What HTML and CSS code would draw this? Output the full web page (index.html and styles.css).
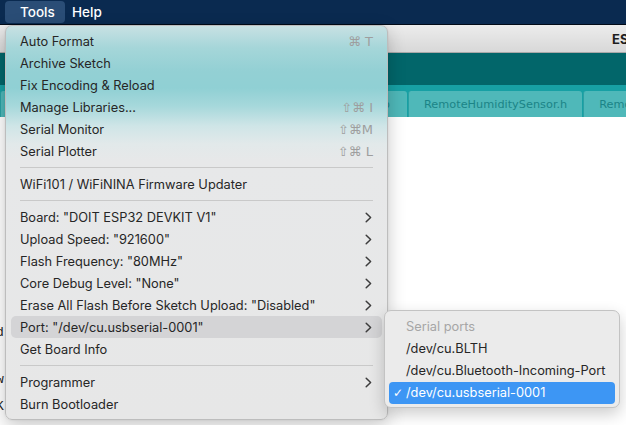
FILE: index.html
```html
<!DOCTYPE html>
<html>
<head>
<meta charset="utf-8">
<link rel="stylesheet" href="styles.css">
</head>
<body>
<div class="menubar">
  <div class="mb-item active">Tools</div>
  <div class="mb-item">Help</div>
</div>
<div class="window">
  <div class="titlebar"><span class="title">ESP32_RemoteHumiditySensor</span></div>
  <div class="toolbar"></div>
  <div class="tabbar">
    <div class="tab first"><span class="tab-text">RemoteHumiditySensor.ino.cpp</span></div>
    <div class="tab"><span class="tab-text">RemoteHumiditySensor.h</span></div>
    <div class="tab"><span class="tab-text">RemoteHumiditySensor.cpp</span></div>
  </div>
  <div class="editor">
    <div class="code-line l1">d</div>
    <div class="code-line l2">w</div>
    <div class="code-line l3">K</div>
  </div>
</div>

<div class="menu">
  <div class="item"><span class="label">Auto Format</span><span class="shortcut">⌘ T</span></div>
  <div class="item"><span class="label">Archive Sketch</span></div>
  <div class="item"><span class="label">Fix Encoding &amp; Reload</span></div>
  <div class="item"><span class="label">Manage Libraries...</span><span class="shortcut">⇧⌘ I</span></div>
  <div class="item"><span class="label">Serial Monitor</span><span class="shortcut">⇧⌘M</span></div>
  <div class="item"><span class="label">Serial Plotter</span><span class="shortcut">⇧⌘ L</span></div>
  <div class="sep"></div>
  <div class="item"><span class="label">WiFi101 / WiFiNINA Firmware Updater</span></div>
  <div class="sep"></div>
  <div class="item"><span class="label">Board: "DOIT ESP32 DEVKIT V1"</span><svg class="chev" width="7" height="11" viewBox="0 0 7 11"><path d="M1.2 1.2 L5.6 5.5 L1.2 9.8" fill="none" stroke="#3c3c3c" stroke-width="1.5" stroke-linecap="round" stroke-linejoin="round"/></svg></div>
  <div class="item"><span class="label">Upload Speed: "921600"</span><svg class="chev" width="7" height="11" viewBox="0 0 7 11"><path d="M1.2 1.2 L5.6 5.5 L1.2 9.8" fill="none" stroke="#3c3c3c" stroke-width="1.5" stroke-linecap="round" stroke-linejoin="round"/></svg></div>
  <div class="item"><span class="label">Flash Frequency: "80MHz"</span><svg class="chev" width="7" height="11" viewBox="0 0 7 11"><path d="M1.2 1.2 L5.6 5.5 L1.2 9.8" fill="none" stroke="#3c3c3c" stroke-width="1.5" stroke-linecap="round" stroke-linejoin="round"/></svg></div>
  <div class="item"><span class="label">Core Debug Level: "None"</span><svg class="chev" width="7" height="11" viewBox="0 0 7 11"><path d="M1.2 1.2 L5.6 5.5 L1.2 9.8" fill="none" stroke="#3c3c3c" stroke-width="1.5" stroke-linecap="round" stroke-linejoin="round"/></svg></div>
  <div class="item"><span class="label">Erase All Flash Before Sketch Upload: "Disabled"</span><svg class="chev" width="7" height="11" viewBox="0 0 7 11"><path d="M1.2 1.2 L5.6 5.5 L1.2 9.8" fill="none" stroke="#3c3c3c" stroke-width="1.5" stroke-linecap="round" stroke-linejoin="round"/></svg></div>
  <div class="item hover"><span class="label">Port: "/dev/cu.usbserial-0001"</span><svg class="chev" width="7" height="11" viewBox="0 0 7 11"><path d="M1.2 1.2 L5.6 5.5 L1.2 9.8" fill="none" stroke="#3c3c3c" stroke-width="1.5" stroke-linecap="round" stroke-linejoin="round"/></svg></div>
  <div class="item"><span class="label">Get Board Info</span></div>
  <div class="sep"></div>
  <div class="item"><span class="label">Programmer</span><svg class="chev" width="7" height="11" viewBox="0 0 7 11"><path d="M1.2 1.2 L5.6 5.5 L1.2 9.8" fill="none" stroke="#3c3c3c" stroke-width="1.5" stroke-linecap="round" stroke-linejoin="round"/></svg></div>
  <div class="item"><span class="label">Burn Bootloader</span></div>
</div>

<div class="submenu">
  <div class="sub-item header">Serial ports</div>
  <div class="sub-item">/dev/cu.BLTH</div>
  <div class="sub-item">/dev/cu.Bluetooth-Incoming-Port</div>
  <div class="sub-item selected"><span class="check">✓</span>/dev/cu.usbserial-0001</div>
</div>
</body>
</html>
```

FILE: styles.css
```css
html, body {
  margin: 0;
  padding: 0;
}
body {
  width: 626px;
  height: 425px;
  overflow: hidden;
  position: relative;
  background: #ffffff;
  font-family: Inter, "Liberation Sans", sans-serif;
}

.menubar {
  height: 24px;
  background: #0a2a50;
  border-bottom: 1px solid #020b18;
  display: flex;
  align-items: center;
  padding-left: 5px;
}
.mb-item {
  color: #ffffff;
  font-size: 13.5px;
  font-weight: 500;
  height: 22px;
  line-height: 22px;
  padding: 0 7px;
}
.mb-item.active {
  background: #2a4d76;
  border-radius: 4px;
  width: 60px;
  box-sizing: border-box;
  padding: 0 0 0 15px;
}

.window {
  display: flex;
  flex-direction: column;
  height: 400px;
}
.titlebar {
  height: 27px;
  background: linear-gradient(#ececec, #d8d8d8);
  border-bottom: 1px solid #a9a9a9;
  display: flex;
  align-items: center;
  padding-left: 612px;
  overflow: hidden;
  white-space: nowrap;
  font-size: 13px;
  font-weight: 700;
  color: #1e1e1e;
}
.toolbar {
  height: 32px;
  background: #02666a;
}
.tabbar {
  height: 32px;
  background: #17a0a4;
  display: flex;
  align-items: flex-end;
  gap: 1px;
  overflow: hidden;
  white-space: nowrap;
}
.tab {
  height: 26px;
  background: #4fb8b9;
  border-radius: 3px 3px 0 0;
  border-left: 1px solid #2aa0a3;
  display: flex;
  align-items: center;
  padding: 0 15px;
  font-family: "DejaVu Sans", sans-serif;
  font-size: 11.3px;
  color: #1b8487;
  flex-shrink: 0;
}
.tab.first {
  width: 407px;
  justify-content: flex-end;
  padding-right: 17px;
  box-sizing: border-box;
}
.editor {
  flex: 1;
  background: #ffffff;
  padding-top: 208px;
}
.code-line {
  height: 16px;
  line-height: 16px;
  margin-left: -4px;
  font-family: "Liberation Mono", monospace;
  font-size: 13px;
  color: #222;
}
.code-line.l2 {
  margin-top: 31px;
}
.code-line.l3 {
  margin-top: 11px;
}

.menu {
  position: absolute;
  left: 5px;
  top: 25px;
  width: 383px;
  height: 395px;
  box-sizing: border-box;
  padding: 4px 5px;
  border-radius: 7px;
  border: 1px solid #bdbdbd;
  background: linear-gradient(180deg,
    #c8e1e3 0px,
    #a5d6d9 22px,
    #93d0d4 45px,
    #90d0d4 62px,
    #a6d8db 80px,
    #cfe5e7 100px,
    #e2e9ea 118px,
    #e7e8e9 135px,
    #e7e7e7 100%);
  box-shadow: 0 6px 18px rgba(0, 0, 0, 0.22), 0 0 2px rgba(0, 0, 0, 0.1);
  font-size: 12.8px;
  color: #262626;
}
.item {
  height: 22px;
  display: flex;
  align-items: center;
  padding: 0 9px;
  border-radius: 5px;
}
.item .label {
  flex: 1;
}
.item.hover {
  background: #d4d4d6;
}
.shortcut {
  color: #9e9e9e;
  font-family: "DejaVu Sans", sans-serif;
  font-size: 13px;
  margin-right: 0;
}
.chev {
  margin-right: 1px;
}
.sep {
  height: 1px;
  background: #c9c9c9;
  margin: 5px 9px;
}

.submenu {
  position: absolute;
  left: 384px;
  top: 310px;
  width: 236px;
  height: 98px;
  box-sizing: border-box;
  padding: 5px 4px;
  border-radius: 7px;
  border: 1px solid #c3c3c3;
  background: #ebebeb;
  box-shadow: 0 6px 16px rgba(0, 0, 0, 0.2);
  font-size: 12.8px;
  color: #262626;
}
.sub-item {
  height: 22px;
  line-height: 22px;
  padding-left: 17px;
  border-radius: 4px;
  position: relative;
  white-space: nowrap;
}
.sub-item.header {
  color: #a6a6a6;
}
.sub-item.selected {
  background: #3d96f4;
  color: #ffffff;
}
.check {
  position: absolute;
  left: 4px;
  top: 0;
  font-family: "DejaVu Sans", sans-serif;
  font-size: 12px;
}
```
